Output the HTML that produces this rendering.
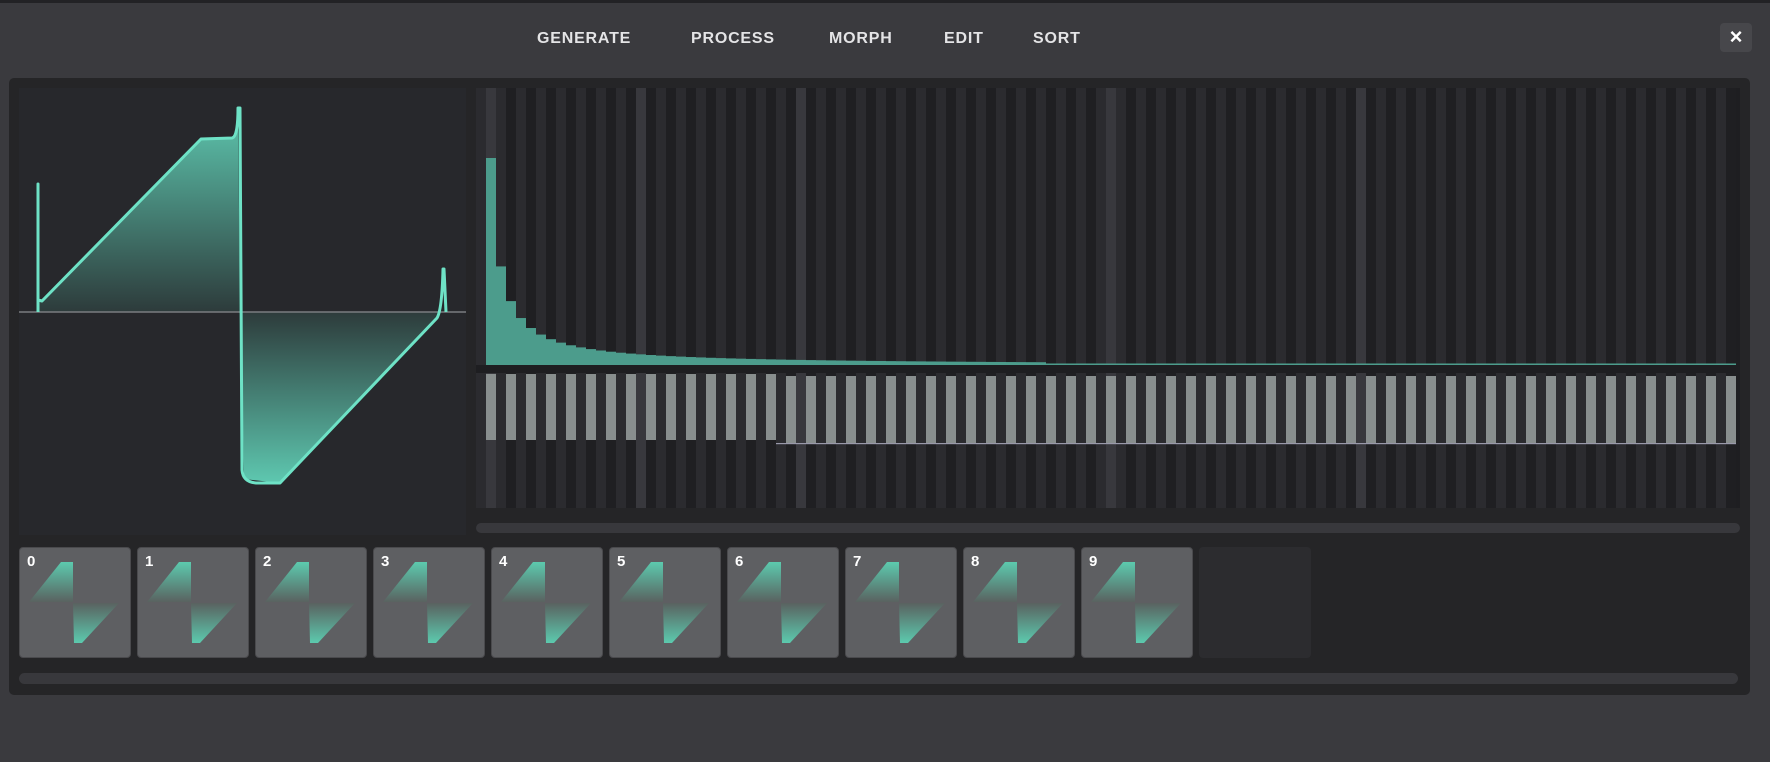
<!DOCTYPE html>
<html><head><meta charset="utf-8"><style>
*{margin:0;padding:0;box-sizing:border-box}
body{width:1770px;height:762px;background:#3a3a3e;position:relative;overflow:hidden;font-family:"Liberation Sans",sans-serif}
.top{position:absolute;left:0;top:0;width:1770px;height:3px;background:#222225}
.nav{position:absolute;top:30px;color:#e4e4e6;font-weight:bold;font-size:16px;letter-spacing:0.8px}
.close{position:absolute;left:1720px;top:23px;width:32px;height:29px;background:#47474b;border-radius:4px;color:#fff;font-size:22px;font-weight:bold;text-align:center;line-height:28px}
.panel{position:absolute;left:9px;top:78px;width:1741px;height:617px;background:#252527;border-radius:5px}
.wave{position:absolute;left:19px;top:88px;width:447px;height:447px;background:#27282c}
.spec{position:absolute;left:476px;top:88px;width:1264px;height:420px;background:#1e1e21}
.sb{position:absolute;background:#38383c;border-radius:6px}
.th{position:absolute;top:547px;width:112px;height:111px;background:#5e5f62;border-radius:4px;border:1px solid #4a4a4d}
.th span{position:absolute;left:7px;top:5px;color:#fff;font-weight:bold;font-size:15px}
.th svg{position:absolute;left:0;top:0}
</style></head><body>
<div class="top"></div>
<div class="nav" style="left:537px">GENERATE</div>
<div class="nav" style="left:691px">PROCESS</div>
<div class="nav" style="left:829px">MORPH</div>
<div class="nav" style="left:944px">EDIT</div>
<div class="nav" style="left:1033px">SORT</div>
<div class="close">×</div>
<div class="panel"></div>
<div class="wave">
<svg width="447" height="447" viewBox="19 88 447 447">
<defs>
<linearGradient id="gu" x1="0" y1="108" x2="0" y2="312" gradientUnits="userSpaceOnUse"><stop offset="0" stop-color="#5ec8b0"/><stop offset="1" stop-color="#2d3b3b"/></linearGradient>
<linearGradient id="gd" x1="0" y1="312" x2="0" y2="483" gradientUnits="userSpaceOnUse"><stop offset="0" stop-color="#2d3b3b"/><stop offset="1" stop-color="#5ec8b0"/></linearGradient>
</defs>
<path d="M38 312 L38 300 L41 300 L201 139 L234 138 Q238 136 238 108 L240 312 Z" fill="url(#gu)"/>
<path d="M240 312 L244 479 L280 483 L437 318 L440 312 Z" fill="url(#gd)"/>
<line x1="19" y1="312" x2="466" y2="312" stroke="#7a7c80" stroke-width="1.5"/>
<path d="M38 312 L38 184 L38 300 L42 301 L201 139 L232 138 Q238 137 238 108 L240 108 L242 470 Q243 482 256 483 L280 483 L437 318 Q442 310 443 269 L444 269 L446 312" fill="none" stroke="#6ee2c6" stroke-width="3" stroke-linejoin="round"/>
</svg>
</div>
<div class="spec"><svg id="sp" width="1264" height="420"></svg></div>
<div class="sb" style="left:476px;top:523px;width:1264px;height:10px"></div>
<div id="thumbs"></div>
<div style="position:absolute;left:1199px;top:547px;width:112px;height:111px;background:#2c2c2f;border-radius:4px"></div>
<div class="sb" style="left:19px;top:673px;width:1719px;height:11px"></div>
<script>
var s='',N=126,W=10;
var light={1:1,16:1,32:1,63:1,88:1};
for(var i=0;i<N;i++){var c=(i%2==0)?'#2b2b2f':'#1f1f22';if(light[i])c='#38383d';s+='<rect x="'+(i*W)+'" y="0" width="'+W+'" height="420" fill="'+c+'"/>';}
var base=277;
for(var i=1;i<N;i++){var h=Math.max(2,207/Math.pow(i,1.07));if(i>56)h=1.5;s+='<rect x="'+(i*W)+'" y="'+(base-h)+'" width="'+W+'" height="'+h+'" fill="#4c9c8c"/>';}
s+='<rect x="0" y="277" width="1264" height="8" fill="#1e1e21"/>';
for(var k=0;k<63;k++){var x=10+k*20;var t=286,b=352;if(k>=15){t=288;b=355;}s+='<rect x="'+x+'" y="'+t+'" width="10" height="'+(b-t)+'" fill="#888e8e"/>';if(k>=15)s+='<rect x="'+(x-10)+'" y="'+(b)+'" width="20" height="1.2" fill="#99a"/>';}
document.getElementById('sp').innerHTML=s;
var h='';
for(var n=0;n<10;n++){var x=19+n*118;
h+='<div class="th" style="left:'+x+'px"><svg width="110" height="109"><defs><linearGradient id="a'+n+'" x1="0" y1="14" x2="0" y2="54" gradientUnits="userSpaceOnUse"><stop offset="0" stop-color="#5ccaae"/><stop offset="1" stop-color="#5a6260"/></linearGradient><linearGradient id="b'+n+'" x1="0" y1="55" x2="0" y2="95" gradientUnits="userSpaceOnUse"><stop offset="0" stop-color="#5a6260"/><stop offset="1" stop-color="#5ccaae"/></linearGradient></defs><path d="M9 54 L41 14 L53 14 L53 54 Z" fill="url(#a'+n+')"/><path d="M53 55 L99 55 L62 95 L54 95 Z" fill="url(#b'+n+')"/></svg><span>'+n+'</span></div>';}
document.getElementById('thumbs').innerHTML=h;
</script>
</body></html>
